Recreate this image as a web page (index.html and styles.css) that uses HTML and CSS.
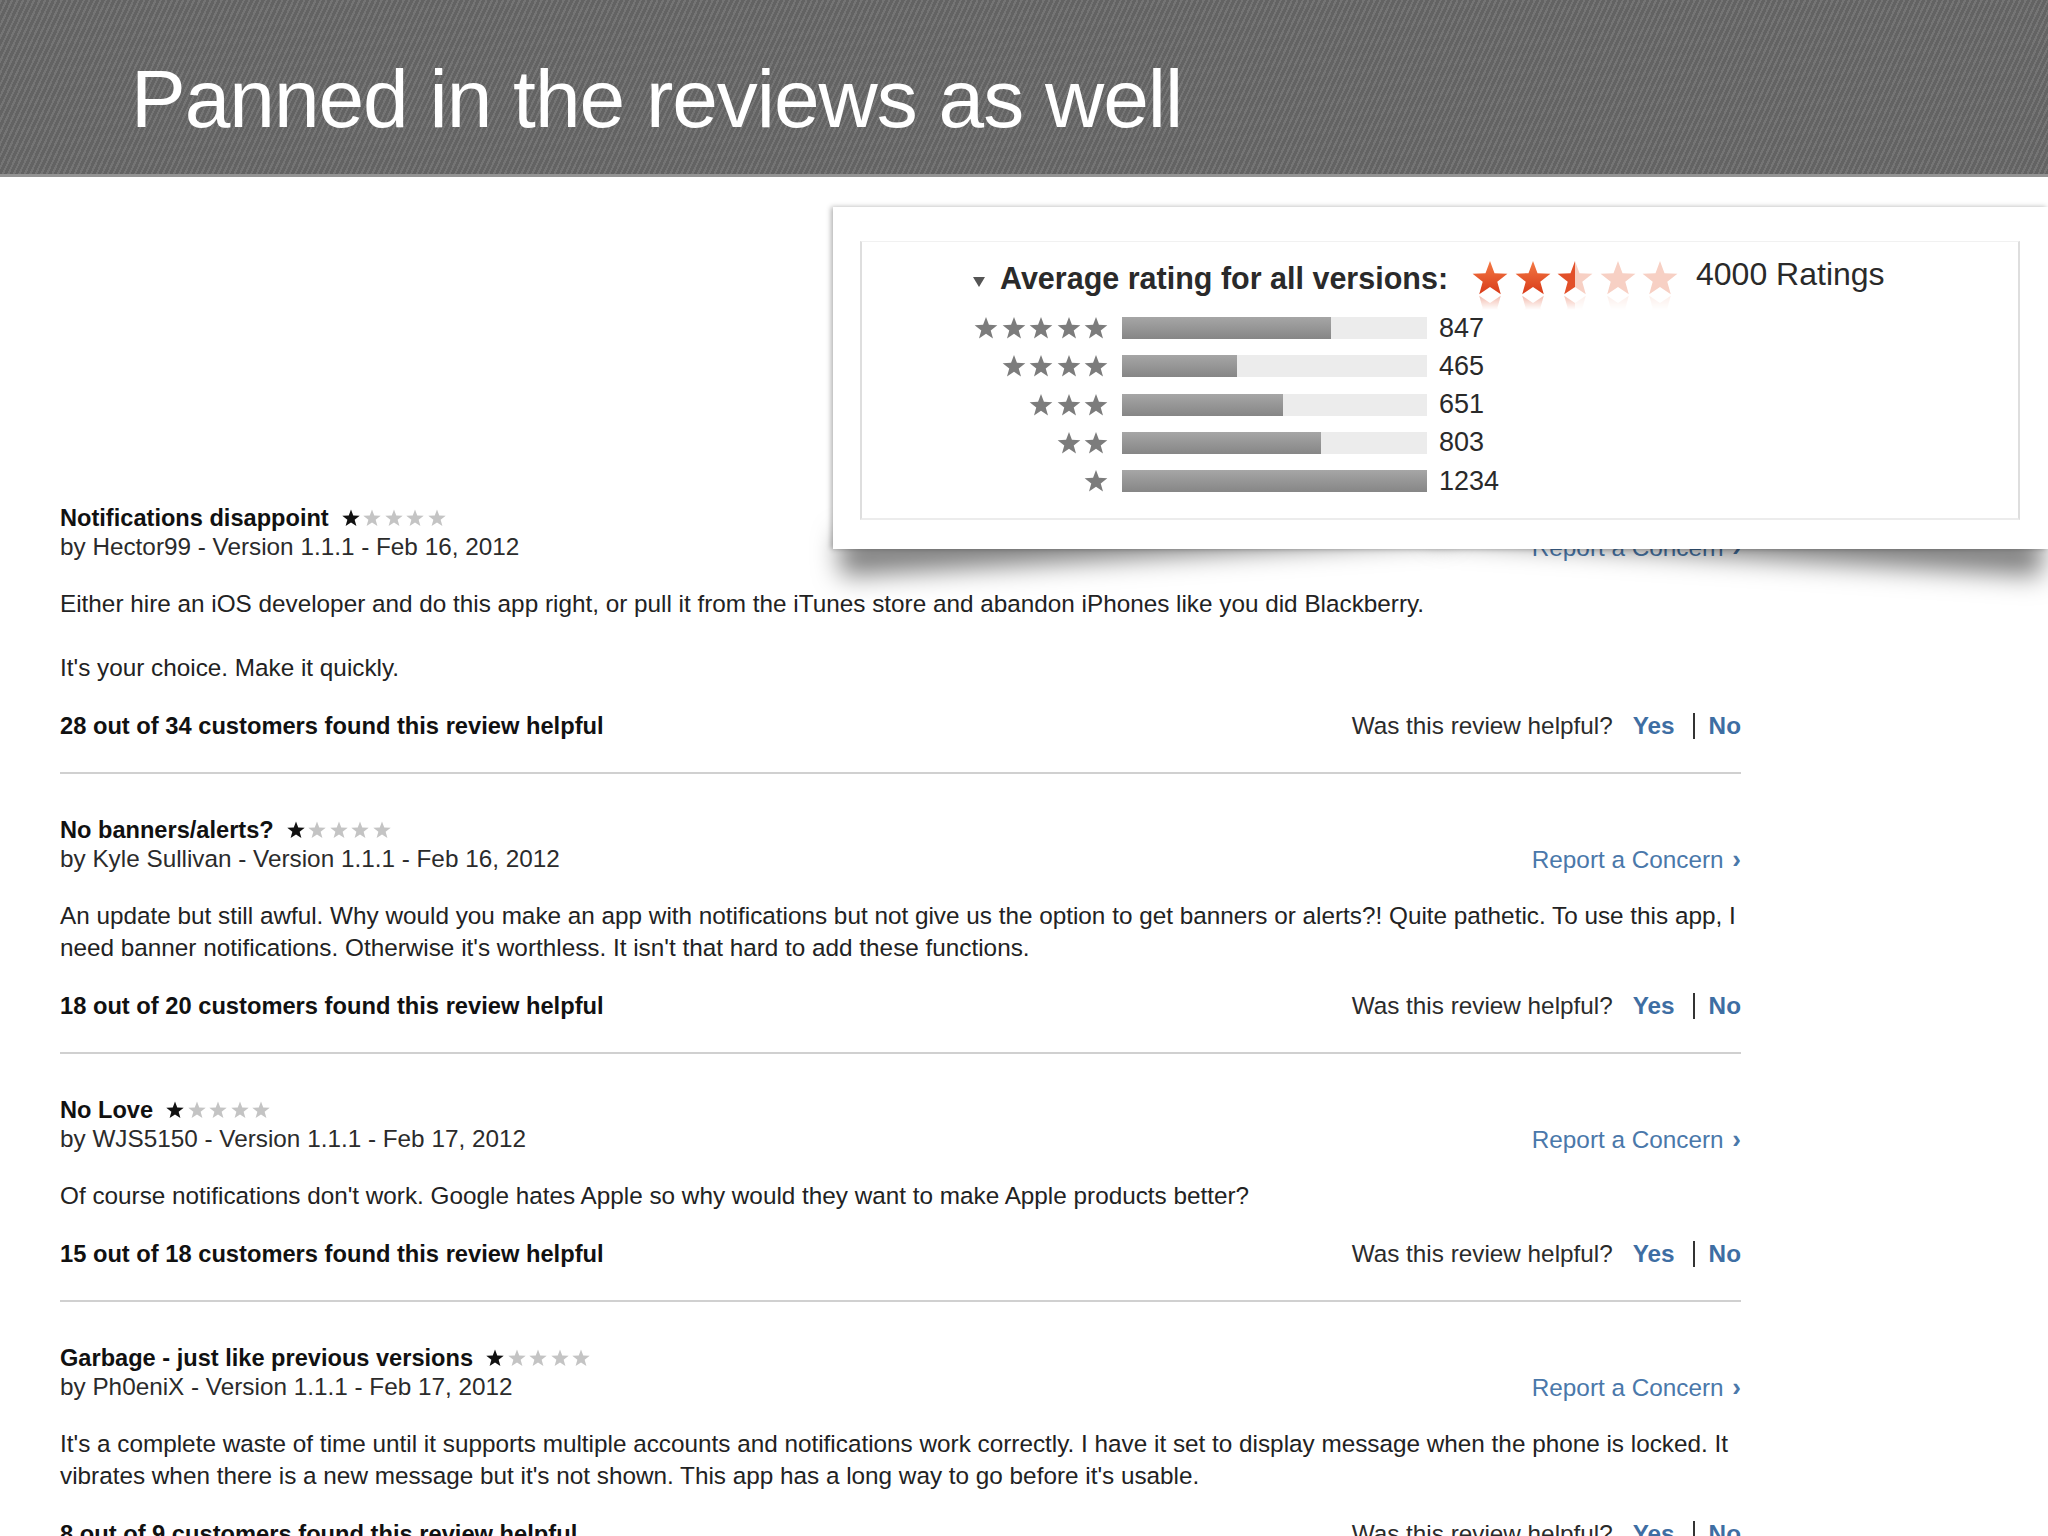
FILE: index.html
```html
<!DOCTYPE html>
<html>
<head>
<meta charset="utf-8">
<title>Panned in the reviews as well</title>
<link rel="stylesheet" href="styles.css">
</head>
<body>
<svg class="defs" width="0" height="0" aria-hidden="true">
  <defs>
    <symbol id="star" viewBox="0 0 24 24">
      <path d="M12 1.8 L14.7 9.08 L22.46 9.4 L16.37 14.22 L18.47 21.7 L12 17.4 L5.53 21.7 L7.63 14.22 L1.54 9.4 L9.3 9.08 Z"/>
    </symbol>
    <linearGradient id="og" x1="0" y1="0" x2="0" y2="1">
      <stop offset="0" stop-color="#f47a45"/>
      <stop offset="1" stop-color="#d83b19"/>
    </linearGradient>
    <linearGradient id="half" x1="0" y1="0" x2="1" y2="0">
      <stop offset="0.5" stop-color="#e2502a"/>
      <stop offset="0.5" stop-color="#f7d0c4"/>
    </linearGradient>
  </defs>
</svg>

<header class="slide-head">
  <h1>Panned in the reviews as well</h1>
</header>

<div class="popup">
  <div class="curl curl-l"></div>
  <div class="curl curl-r"></div>
  <div class="card">
    <div class="inner">
      <div class="avg">
        <span class="tri"></span>
        <span class="avg-label">Average rating for all versions:</span>
        <span class="big-stars">
          <svg><use href="#star" fill="url(#og)"/></svg>
          <svg><use href="#star" fill="url(#og)"/></svg>
          <svg><use href="#star" fill="url(#half)"/></svg>
          <svg><use href="#star" fill="#f7d0c4"/></svg>
          <svg><use href="#star" fill="#f7d0c4"/></svg>
        </span>
        <span class="count">4000 Ratings</span>
      </div>
      <div class="hist">
        <div class="row">
          <div class="row-stars"><svg><use href="#star"/></svg><svg><use href="#star"/></svg><svg><use href="#star"/></svg><svg><use href="#star"/></svg><svg><use href="#star"/></svg></div>
          <div class="bar"><div class="fill" style="width:68.6%"></div></div>
          <span class="num">847</span>
        </div>
        <div class="row">
          <div class="row-stars"><svg><use href="#star"/></svg><svg><use href="#star"/></svg><svg><use href="#star"/></svg><svg><use href="#star"/></svg></div>
          <div class="bar"><div class="fill" style="width:37.7%"></div></div>
          <span class="num">465</span>
        </div>
        <div class="row">
          <div class="row-stars"><svg><use href="#star"/></svg><svg><use href="#star"/></svg><svg><use href="#star"/></svg></div>
          <div class="bar"><div class="fill" style="width:52.8%"></div></div>
          <span class="num">651</span>
        </div>
        <div class="row">
          <div class="row-stars"><svg><use href="#star"/></svg><svg><use href="#star"/></svg></div>
          <div class="bar"><div class="fill" style="width:65.1%"></div></div>
          <span class="num">803</span>
        </div>
        <div class="row">
          <div class="row-stars"><svg><use href="#star"/></svg></div>
          <div class="bar"><div class="fill" style="width:100%"></div></div>
          <span class="num">1234</span>
        </div>
      </div>
    </div>
  </div>
</div>

<main class="reviews">
  <article class="review">
    <div class="r-title">Notifications disappoint
      <span class="r-stars"><svg class="on"><use href="#star"/></svg><svg><use href="#star"/></svg><svg><use href="#star"/></svg><svg><use href="#star"/></svg><svg><use href="#star"/></svg></span>
    </div>
    <div class="r-meta"><span>by Hector99 - Version 1.1.1 - Feb 16, 2012</span><span class="report">Report a Concern <b>›</b></span></div>
    <p class="r-body">Either hire an iOS developer and do this app right, or pull it from the iTunes store and abandon iPhones like you did Blackberry.<br><br>It's your choice. Make it quickly.</p>
    <div class="r-foot"><span class="helpful-count">28 out of 34 customers found this review helpful</span><span class="vote">Was this review helpful?<span class="yes">Yes</span><span class="sep"></span><span class="no">No</span></span></div>
  </article>

  <article class="review">
    <div class="r-title">No banners/alerts?
      <span class="r-stars"><svg class="on"><use href="#star"/></svg><svg><use href="#star"/></svg><svg><use href="#star"/></svg><svg><use href="#star"/></svg><svg><use href="#star"/></svg></span>
    </div>
    <div class="r-meta"><span>by Kyle Sullivan - Version 1.1.1 - Feb 16, 2012</span><span class="report">Report a Concern <b>›</b></span></div>
    <p class="r-body">An update but still awful. Why would you make an app with notifications but not give us the option to get banners or alerts?! Quite pathetic. To use this app, I<br>need banner notifications. Otherwise it's worthless. It isn't that hard to add these functions.</p>
    <div class="r-foot"><span class="helpful-count">18 out of 20 customers found this review helpful</span><span class="vote">Was this review helpful?<span class="yes">Yes</span><span class="sep"></span><span class="no">No</span></span></div>
  </article>

  <article class="review">
    <div class="r-title">No Love
      <span class="r-stars"><svg class="on"><use href="#star"/></svg><svg><use href="#star"/></svg><svg><use href="#star"/></svg><svg><use href="#star"/></svg><svg><use href="#star"/></svg></span>
    </div>
    <div class="r-meta"><span>by WJS5150 - Version 1.1.1 - Feb 17, 2012</span><span class="report">Report a Concern <b>›</b></span></div>
    <p class="r-body">Of course notifications don't work. Google hates Apple so why would they want to make Apple products better?</p>
    <div class="r-foot"><span class="helpful-count">15 out of 18 customers found this review helpful</span><span class="vote">Was this review helpful?<span class="yes">Yes</span><span class="sep"></span><span class="no">No</span></span></div>
  </article>

  <article class="review">
    <div class="r-title">Garbage - just like previous versions
      <span class="r-stars"><svg class="on"><use href="#star"/></svg><svg><use href="#star"/></svg><svg><use href="#star"/></svg><svg><use href="#star"/></svg><svg><use href="#star"/></svg></span>
    </div>
    <div class="r-meta"><span>by Ph0eniX - Version 1.1.1 - Feb 17, 2012</span><span class="report">Report a Concern <b>›</b></span></div>
    <p class="r-body">It's a complete waste of time until it supports multiple accounts and notifications work correctly. I have it set to display message when the phone is locked. It<br>vibrates when there is a new message but it's not shown. This app has a long way to go before it's usable.</p>
    <div class="r-foot"><span class="helpful-count">8 out of 9 customers found this review helpful</span><span class="vote">Was this review helpful?<span class="yes">Yes</span><span class="sep"></span><span class="no">No</span></span></div>
  </article>
</main>
</body>
</html>
```

FILE: styles.css
```css
* { box-sizing: border-box; }

html, body {
  margin: 0;
  padding: 0;
}

body {
  position: relative;
  width: 2048px;
  height: 1536px;
  overflow: hidden;
  background: #ffffff;
  font-family: "Liberation Sans", Arial, Helvetica, sans-serif;
  color: #222;
}

.defs {
  position: absolute;
  width: 0;
  height: 0;
  overflow: hidden;
}

/* ---------- slide header ---------- */
.slide-head {
  height: 177px;
  padding: 58px 0 0 131px;
  border-bottom: 3px solid #939393;
  background-color: #6a6a6a;
  background-image: repeating-linear-gradient(115deg,
      rgba(255, 255, 255, 0.07) 0 2px,
      rgba(0, 0, 0, 0.07) 2px 5px);
}

.slide-head h1 {
  margin: 0;
  font-weight: 400;
  font-size: 82px;
  line-height: 82px;
  letter-spacing: -1px;
  color: #ffffff;
}

/* ---------- popup rating card ---------- */
.popup {
  position: absolute;
  left: 833px;
  top: 207px;
  width: 1215px;
  height: 342px;
  z-index: 5;
}

.curl {
  position: absolute;
  bottom: 28px;
  width: 50%;
  height: 40px;
  background: #888;
  box-shadow: 0 36px 26px rgba(0, 0, 0, 0.5);
}

.curl-l {
  left: 4px;
  transform: rotate(-3.6deg);
}

.curl-r {
  right: 4px;
  transform: rotate(3.6deg);
}

.card {
  position: relative;
  height: 100%;
  background: #ffffff;
  box-shadow: -2px 0 5px rgba(0, 0, 0, 0.3);
  padding: 34px 28px 29px 27px;
}

.inner {
  height: 100%;
  border: 2px solid #dedede;
  border-top: 1px solid #f1f1f1;
  border-bottom-color: #ececec;
  padding: 16px 0 0 108px;
}

.avg {
  display: flex;
  align-items: center;
  height: 40px;
}

.tri {
  width: 0;
  height: 0;
  margin-left: 3px;
  margin-top: 8px;
  border-left: 6px solid transparent;
  border-right: 6px solid transparent;
  border-top: 10px solid #555;
}

.avg-label {
  margin-left: 15px;
  font-weight: 700;
  font-size: 30.5px;
  color: #2a2a2a;
}

.big-stars {
  display: flex;
  margin-left: 22px;
  -webkit-box-reflect: below -6px linear-gradient(transparent 55%, rgba(0, 0, 0, 0.45));
}

.big-stars svg {
  width: 40px;
  height: 40px;
  margin-right: 2.6px;
}

.count {
  margin-left: 13px;
  margin-bottom: 8px;
  font-size: 32px;
  color: #2a2a2a;
}

.hist {
  margin-top: 11px;
}

.row {
  display: flex;
  align-items: center;
  height: 38.25px;
}

.row-stars {
  width: 139px;
  display: flex;
  justify-content: flex-end;
}

.row-stars svg {
  width: 26px;
  height: 26px;
  margin-left: 1.5px;
  fill: #7c7c7c;
}

.bar {
  margin-left: 13px;
  width: 305px;
  height: 22px;
  background: #ececec;
}

.fill {
  height: 100%;
  background: linear-gradient(#a6a6a6, #868686);
}

.num {
  margin-left: 12px;
  font-size: 27px;
  color: #2a2a2a;
}

/* ---------- reviews ---------- */
.reviews {
  margin: 285px 0 0 60px;
  width: 1681px;
}

.review {
  padding: 41.5px 0 30px;
  border-bottom: 2px solid #d0d0d0;
}

.r-title {
  display: flex;
  align-items: center;
  height: 29px;
  font-weight: 700;
  font-size: 23.6px;
  color: #111;
}

.r-stars {
  display: flex;
  margin-left: 12px;
}

.r-stars svg {
  width: 20px;
  height: 20px;
  margin-right: 1.5px;
  fill: #c4c4c4;
}

.r-stars svg.on {
  fill: #111;
}

.r-meta {
  display: flex;
  justify-content: space-between;
  align-items: center;
  height: 29px;
  font-size: 24.3px;
  color: #2b2b2b;
}

.report {
  font-size: 24.3px;
  color: #4a78aa;
}

.report b {
  margin-left: 2px;
  font-size: 26px;
}

.r-body {
  margin: 26px 0 0;
  font-size: 24.3px;
  line-height: 32px;
  white-space: nowrap;
  color: #222;
}

.r-foot {
  display: flex;
  justify-content: space-between;
  align-items: center;
  height: 32px;
  margin-top: 26.5px;
  font-size: 24.3px;
}

.helpful-count {
  font-size: 23.7px;
  font-weight: 700;
  color: #111;
}

.vote {
  display: flex;
  align-items: center;
  color: #2b2b2b;
}

.yes,
.no {
  font-weight: 700;
  color: #3e6ea3;
}

.yes {
  margin-left: 20px;
}

.sep {
  width: 2px;
  height: 26px;
  margin: 0 14px 0 18px;
  background: #333;
}
```
